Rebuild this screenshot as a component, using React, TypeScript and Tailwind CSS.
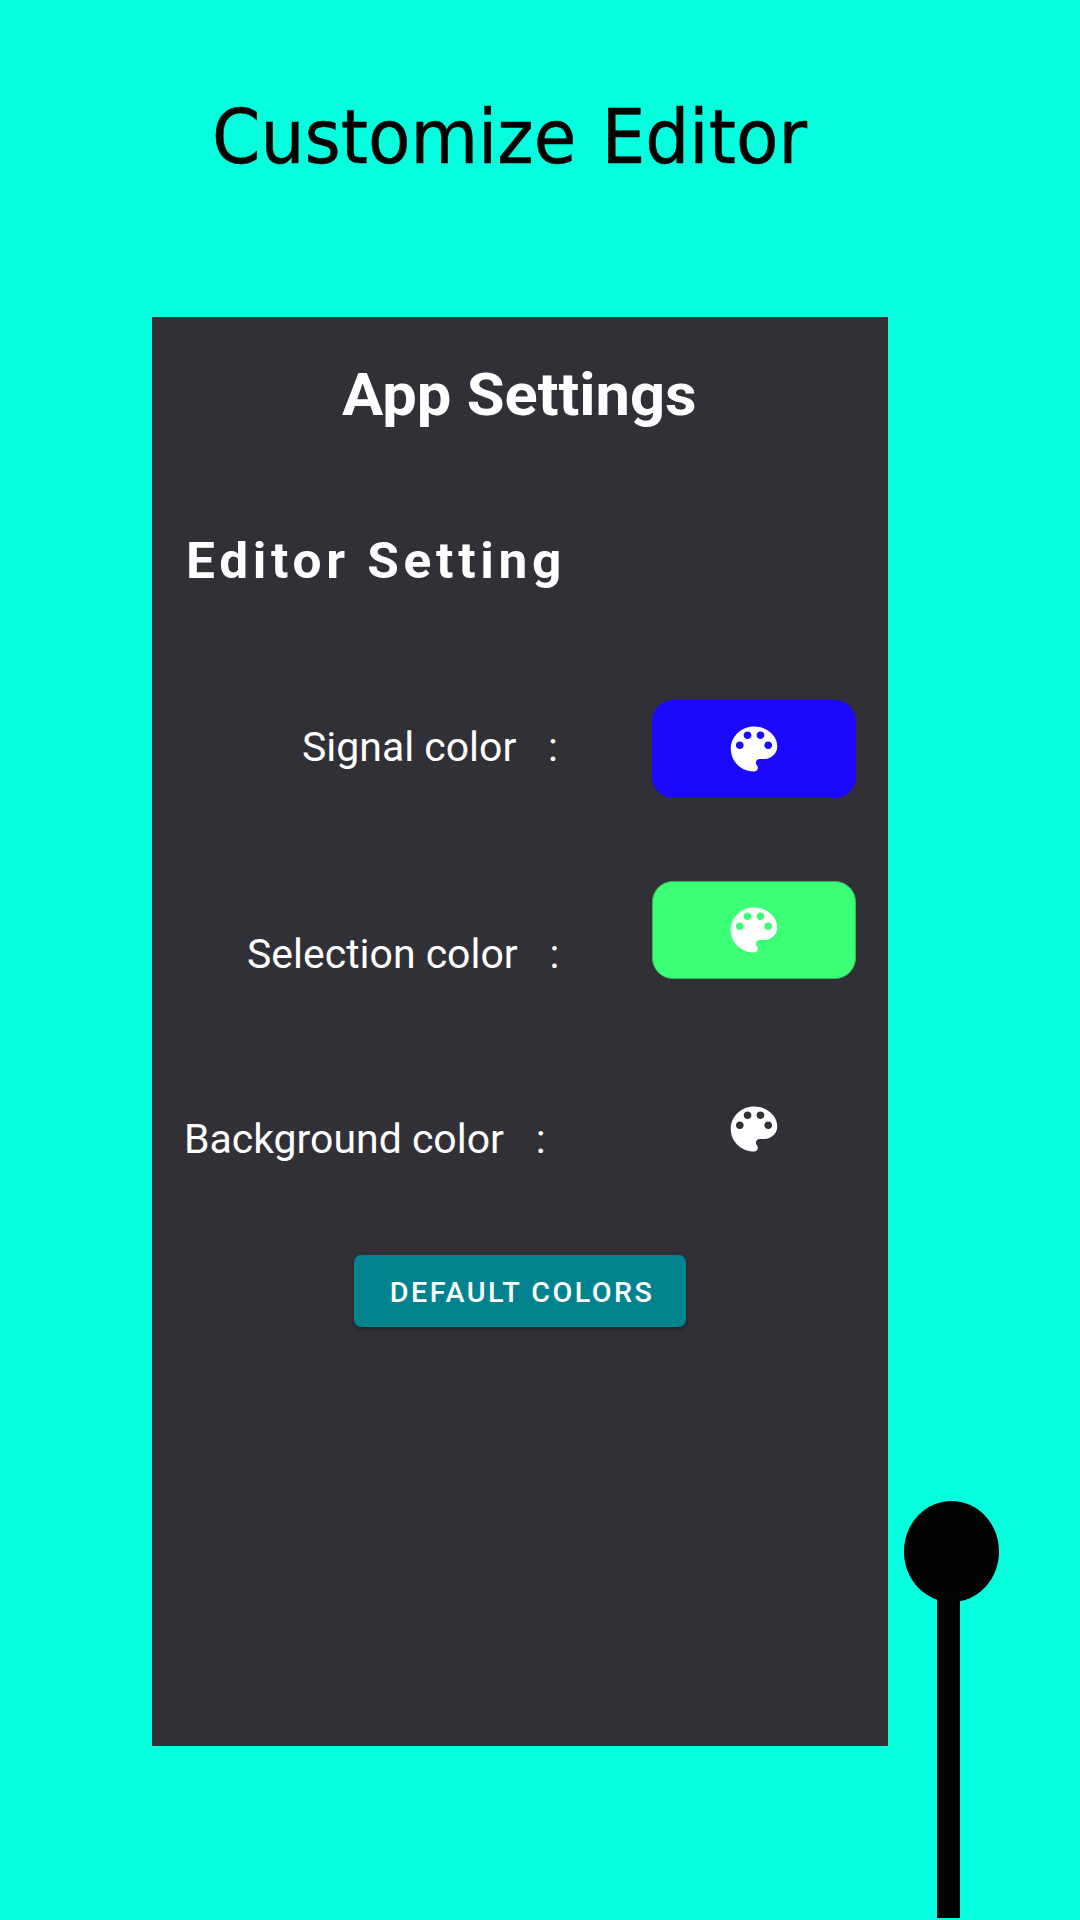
const PALETTE =
  "M12 3c-4.97 0-9 4.03-9 9s4.03 9 9 9c.83 0 1.5-.67 1.5-1.5 0-.39-.15-.74-.39-1.01-.23-.26-.38-.61-.38-.99 0-.83.67-1.5 1.5-1.5H16c2.76 0 5-2.24 5-5 0-4.42-4.03-8-9-8zm-5.5 9c-.83 0-1.5-.67-1.5-1.5S5.67 9 6.5 9 8 9.67 8 10.5 7.33 12 6.5 12zm3-4C8.67 8 8 7.33 8 6.5S8.67 5 9.5 5s1.5.67 1.5 1.5S10.33 8 9.5 8zm5 0c-.83 0-1.5-.67-1.5-1.5S13.67 5 14.5 5s1.5.67 1.5 1.5S15.33 8 14.5 8zm3 4c-.83 0-1.5-.67-1.5-1.5S16.67 9 17.5 9s1.5.67 1.5 1.5-.67 1.5-1.5 1.5z";

function SettingRow({ label, row, text, swatch }: {
  label: string;
  row: string;
  text: string;
  swatch: string;
}) {
  return (
    <div className={`flex h-[98px] items-start justify-between pr-[32.5px] text-[40px] leading-none ${row}`}>
      <div className={`whitespace-nowrap ${text}`}>
        <div className="flex origin-left scale-x-[1.024] gap-[31px]">
          <span>{label}</span>
          <span>:</span>
        </div>
      </div>
      <button aria-label={label} className={`flex h-[98px] w-[203.5px] shrink-0 items-center justify-center rounded-[21px] ${swatch}`}>
        <svg viewBox="0 0 24 24" preserveAspectRatio="none" className="h-[60px] w-[62px] fill-white">
          <path d={PALETTE} />
        </svg>
      </button>
    </div>
  );
}

export default function App() {
  return (
    <main className="relative flex h-[1920px] w-[1080px] flex-col overflow-hidden bg-[#05ffde]">
      <h1 className="h-[317px] pt-[100px] pl-[211.5px] font-['DejaVu_Sans'] text-[75px] leading-none whitespace-nowrap text-black">
        <span className="inline-block origin-left scale-x-[0.926] [word-spacing:3px] [-webkit-text-stroke:0.5px_black]">Customize Editor</span>
      </h1>

      <section className="ml-[151.5px] flex h-[1428.5px] w-[736.5px] flex-col bg-[#323037] font-[Roboto] text-white">
        <h2 className="h-[197px] pt-[48px] pl-[190.5px] text-[60px] leading-none font-bold whitespace-nowrap">
          <span className="inline-block origin-left scale-x-[1.024]">App Settings</span>
        </h2>
        <h3 className="h-[87px] border-y-2 border-t-[#302e35] border-b-[#2f2d34] pt-[20px] pl-[34.5px] text-[50px] leading-none font-bold tracking-[4.6px] whitespace-nowrap">
          <span className="inline-block origin-left scale-x-[1.027]">Editor Setting</span>
        </h3>

        <SettingRow label="Signal color" row="mt-[99px]" text="pt-[28px] pl-[150px]" swatch="bg-[#1a08ff]" />
        <SettingRow label="Selection color" row="mt-[83px]" text="pt-[54px] pl-[95px]" swatch="border border-[#36b55f] bg-[#3bff74]" />
        <SettingRow label="Background color" row="mt-[101px]" text="pt-[40px] pl-[32px]" swatch="bg-transparent" />

        <button className="mt-[77px] ml-[202.5px] flex h-[72px] w-[332px] items-center justify-center rounded-[7px] bg-[#00838f] pt-[3px] pl-[5px] text-[28px] leading-none font-medium tracking-[2.4px] whitespace-nowrap shadow-[0_2px_4px_rgba(0,0,0,0.3)]">
          <span className="inline-block scale-x-[1.025]">DEFAULT COLORS</span>
        </button>
      </section>

      <div className="absolute top-[1501px] left-[904px] flex flex-col items-center">
        <div className="h-[100.5px] w-[95px] rounded-[50%] bg-[#000302]" />
        <div className="-mt-[10px] mr-[6px] h-[326px] w-[22.5px] bg-[#000302]" />
      </div>
    </main>
  );
}
